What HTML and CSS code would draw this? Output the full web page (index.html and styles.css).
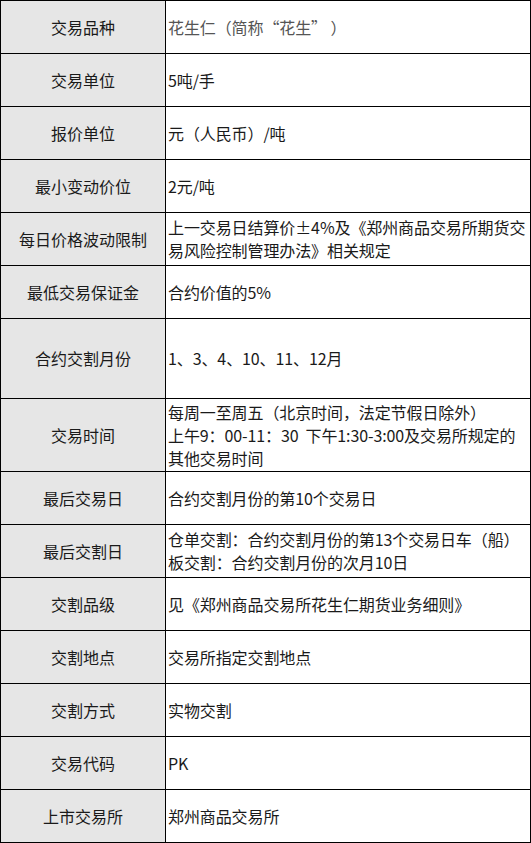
FILE: index.html
```html
<!DOCTYPE html>
<html lang="zh">
<head>
<meta charset="utf-8">
<link rel="stylesheet" href="styles.css">
</head>
<body>
<div class="spec">
  <div class="k">交易品种</div><div class="v grey"><div>花生仁（简称“花生” ）</div></div>
  <div class="k">交易单位</div><div class="v"><div>5吨/手</div></div>
  <div class="k">报价单位</div><div class="v"><div>元（人民币）/吨</div></div>
  <div class="k">最小变动价位</div><div class="v"><div>2元/吨</div></div>
  <div class="k">每日价格波动限制</div><div class="v"><div>上一交易日结算价±4%及《郑州商品交易所期货交<br>易风险控制管理办法》相关规定</div></div>
  <div class="k">最低交易保证金</div><div class="v"><div>合约价值的5%</div></div>
  <div class="k">合约交割月份</div><div class="v"><div>1、3、4、10、11、12月</div></div>
  <div class="k">交易时间</div><div class="v"><div>每周一至周五（北京时间，法定节假日除外）<br>上午9：00-11：30&nbsp; 下午1:30-3:00及交易所规定的<br>其他交易时间</div></div>
  <div class="k">最后交易日</div><div class="v"><div>合约交割月份的第10个交易日</div></div>
  <div class="k">最后交割日</div><div class="v"><div>仓单交割：合约交割月份的第13个交易日车（船）<br>板交割：合约交割月份的次月10日</div></div>
  <div class="k">交割品级</div><div class="v"><div>见《郑州商品交易所花生仁期货业务细则》</div></div>
  <div class="k">交割地点</div><div class="v"><div>交易所指定交割地点</div></div>
  <div class="k">交割方式</div><div class="v"><div>实物交割</div></div>
  <div class="k">交易代码</div><div class="v"><div>PK</div></div>
  <div class="k last">上市交易所</div><div class="v last"><div>郑州商品交易所</div></div>
</div>
</body>
</html>
```
FILE: styles.css
```css
html, body {
  margin: 0;
  padding: 0;
  background: #fff;
}
.spec {
  width: 531px;
  box-sizing: border-box;
  border: 1px solid #000;
  display: grid;
  grid-template-columns: 165px 1fr;
  grid-template-rows: repeat(6, 53px) 80px 73px repeat(6, 53px) 52px;
  font-family: "Noto Sans CJK SC", "Noto Sans", sans-serif;
  font-size: 16px;
  line-height: 23px;
  color: #1a1a1a;
}
.k, .v {
  border-bottom: 1px solid #000;
  box-sizing: border-box;
  display: flex;
  align-items: center;
  white-space: nowrap;
  overflow: hidden;
}
.k {
  background: #e6e6e6;
  border-right: 1px solid #000;
  justify-content: center;
}
.v {
  padding-left: 2px;
  letter-spacing: -0.1px;
}
.grey {
  color: #555;
}
.last {
  border-bottom: none;
}
```
